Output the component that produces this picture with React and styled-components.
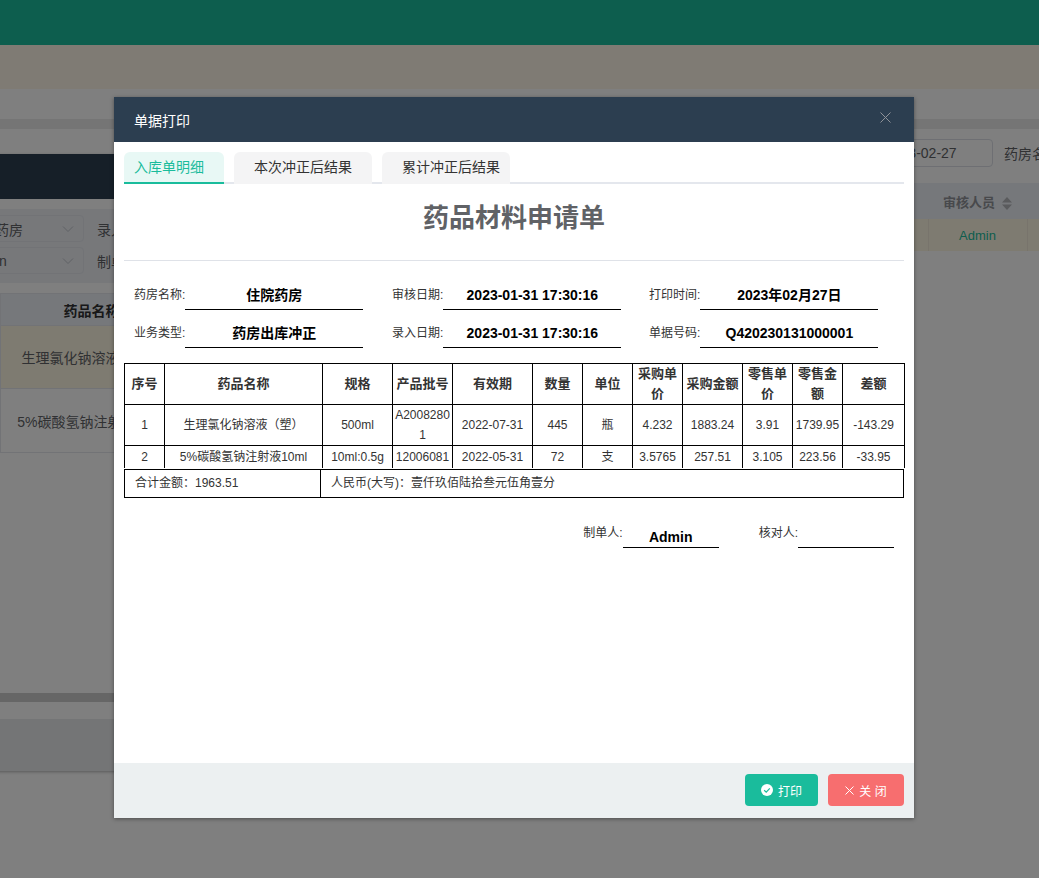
import React from "react";
import styled, { createGlobalStyle } from "styled-components";

const Global = createGlobalStyle`
  html, body { margin: 0; padding: 0; height: 100%; overflow: hidden; background: #fff; }
  body { font-family: "Liberation Sans", "Noto Sans CJK SC", sans-serif; font-size: 14px; color: #333; }
  * { box-sizing: border-box; }
`;

const Page = styled.div`
  position: relative; width: 1039px; height: 878px; overflow: hidden; background: #fff;
  display: flex; flex-direction: column;
`;
const TopBar = styled.div`height: 45px; background: #1abc9c; flex: none;`;
const Notice = styled.div`height: 44px; background: #fff7e9; flex: none;`;
const TabStrip = styled.div`height: 30px; background: #fff; flex: none;`;
const Gutter = styled.div`height: 10px; background: #eaeaea; flex: none;`;

const Toolbar = styled.div`
  display: flex; align-items: center; gap: 11px; padding: 10px 0 0 860px; flex: none; white-space: nowrap;
`;
const DateInput = styled.div`
  flex: none; width: 133px; height: 28px; padding-left: 24px; line-height: 26px;
  border: 1px solid #dcdfe6; border-radius: 4px; color: #606266;
`;
const ToolLabel = styled.span`color: #606266;`;

const ListTable = styled.table`
  margin-top: 16px; width: 1127px; table-layout: fixed; border-collapse: collapse; flex: none;
`;
const ListHead = styled.th`
  height: 36px; padding: 0; background: #ecf0f6; font-size: 13px; font-weight: bold; color: #909399; text-align: center;
  svg { margin-left: 7px; vertical-align: -3px; }
`;
const ListCell = styled.td`
  height: 32px; padding: 0; background: #fdf6e3; font-size: 13px; text-align: center; color: #1abc9c;
  border-right: 1px solid #f0e9d8;
`;

const BackDialog = styled.div`
  position: absolute; left: -54px; top: 154px; width: 900px; height: 617px;
  background: #fff; display: flex; flex-direction: column;
  box-shadow: 0 1px 3px rgba(0,0,0,.3);
`;
const BackHead = styled.div`height: 45px; flex: none; background: #2c3e50;`;
const FilterBlock = styled.div`
  margin-top: 10px; height: 74px; flex: none; padding: 6px 10px 0; background: #eef0f4;
  display: flex; flex-direction: column; gap: 5px;
`;
const FilterRow = styled.div`display: flex; align-items: center; gap: 13px;`;
const FakeSelect = styled.div`
  width: 128px; height: 27px; padding: 0 10px; border: 1px solid #e4e7ed; border-radius: 4px; flex: none;
  display: flex; align-items: center; justify-content: space-between; color: #606266; font-size: 14px;
  svg { margin-right: -1px; }
`;
const FilterLabel = styled.span`color: #606266; font-size: 14px;`;
const BackTable = styled.table`
  margin: 10px 0 0 54px; width: 836px; table-layout: fixed; border-collapse: collapse; flex: none;
`;
const BackHeadCell = styled.th`
  height: 32px; padding: 0; background: #ecf0f6; border: 1px solid #e4e7ed; font-size: 14px; color: #303133;
`;
const BackCell = styled.td`
  height: ${p => p.$h}px; padding: 0; background: ${p => p.$warn ? "#fdf6e3" : "#fff"};
  border: 1px solid #e4e7ed; text-align: center; color: #606266; font-size: 14px;
`;
const Spacer = styled.div`flex: 1;`;
const ScrollTrack = styled.div`height: 9px; flex: none; background: #cdcdcd; margin-bottom: 17px;`;
const BackFoot = styled.div`height: 52px; flex: none; background: #e8eaec;`;

const Mask = styled.div`position: absolute; inset: 0; background: rgba(0,0,0,.5);`;

const Modal = styled.div`
  position: absolute; left: 114px; top: 97px; width: 800px; height: 721px; background: #fff;
  display: flex; flex-direction: column; box-shadow: 0 1px 4px rgba(0,0,0,.4);
`;
const ModalHead = styled.div`
  height: 45px; flex: none; background: #2c3e50; color: #fff; padding: 0 24px 0 20px;
  display: flex; align-items: center; justify-content: space-between; font-size: 14px;
`;
const CloseX = styled.svg`display: block; margin-top: -4px; margin-right: -1px;`;
const ModalBody = styled.div`flex: 1; padding: 10px 10px 0; overflow: hidden;`;
const Tabs = styled.div`display: flex; gap: 10px; height: 32px; border-bottom: 2px solid #e4e7ed;`;
const Tab = styled.div`
  height: 32px; flex: none; line-height: 31px; font-size: 14px; border-radius: 6px 6px 0 0;
  padding: ${p => p.$pad};
  background: ${p => p.$active ? "#e8f8f5" : "#f4f4f5"};
  color: ${p => p.$active ? "#1abc9c" : "#333"};
  ${p => p.$active ? "border-bottom: 2px solid #1abc9c;" : ""}
`;
const Title = styled.h1`
  margin: 0; height: 77px; line-height: 69px; text-align: center; font-size: 26px; font-weight: bold;
  color: #606266; border-bottom: 1px solid #dfe2e8;
`;
const InfoGrid = styled.div`
  display: grid; grid-template-columns: 258px 257px 1fr; row-gap: 9px; padding: 20px 0 0 10px;
`;
const Field = styled.div`display: flex; align-items: flex-end;`;
const FieldLabel = styled.span`font-size: 12px; line-height: 28px; height: 29px; color: #333; flex: none;`;
const FieldValue = styled.span`
  width: ${p => p.$w}px; height: ${p => p.$h}px; line-height: ${p => p.$h - 1}px; flex: none; text-align: center;
  font-size: 14px; font-weight: bold; color: #000; border-bottom: 1px solid #000;
`;
const Sheet = styled.table`
  margin-top: 15px; width: 780px; table-layout: fixed; border-collapse: collapse;
`;
const SheetHead = styled.th`
  height: 41px; padding: 0; border: 1px solid #000; font-size: 13px; line-height: 20px; font-weight: bold; color: #333;
  word-break: break-all; text-align: center;
`;
const SheetCell = styled.td`
  height: ${p => p.$last ? 22 : 41}px; padding: 0; border: 1px solid #000; ${p => p.$last ? "border-bottom: 0;" : ""}
  font-size: 12px; line-height: 20px; color: #333; word-break: break-all; text-align: center;
`;
const TotalRow = styled.div`
  margin-top: 1px; height: 29px; width: 780px; border: 1px solid #000; display: flex; font-size: 12px; color: #333;
`;
const TotalCell = styled.div`
  width: ${p => p.$w || "auto"}; flex: ${p => p.$w ? "none" : 1}; line-height: 27px; padding-left: 10px;
  ${p => p.$w ? "border-right: 1px solid #000;" : ""}
`;
const SignRow = styled.div`
  display: flex; justify-content: flex-end; gap: 40px; margin-top: 21px; padding-right: 10px;
`;
const ModalFoot = styled.div`
  height: 55px; flex: none; background: #ecf0f1; padding: 11px 10px 0; display: flex; justify-content: flex-end; gap: 10px;
`;
const Btn = styled.button`
  width: ${p => p.$w}px; height: 32px; border: 0; border-radius: 4px; padding: 0; color: #fff; font: inherit; font-size: 12px;
  background: ${p => p.$bg}; display: flex; align-items: center; justify-content: center; gap: 5px;
`;

const Chevron = () => (
  <svg width="12" height="12" viewBox="0 0 12 12" fill="none" stroke="#c0c4cc" strokeWidth="1"><path d="M1 3.5l5 5 5-5" /></svg>
);

const cols = [40, 158, 70, 60, 80, 50, 50, 50, 60, 50, 50, 62];
const heads = ["序号", "药品名称", "规格", "产品批号", "有效期", "数量", "单位", "采购单价", "采购金额", "零售单价", "零售金额", "差额"];
const rows = [
  ["1", "生理氯化钠溶液（塑）", "500ml", "A20082801", "2022-07-31", "445", "瓶", "4.232", "1883.24", "3.91", "1739.95", "-143.29"],
  ["2", "5%碳酸氢钠注射液10ml", "10ml:0.5g", "12006081", "2022-05-31", "72", "支", "3.5765", "257.51", "3.105", "223.56", "-33.95"],
];
const info = [
  ["药房名称:", "住院药房"], ["审核日期:", "2023-01-31 17:30:16"], ["打印时间:", "2023年02月27日"],
  ["业务类型:", "药房出库冲正"], ["录入日期:", "2023-01-31 17:30:16"], ["单据号码:", "Q420230131000001"],
];

export default function App() {
  return (
    <Page>
      <Global />
      <TopBar />
      <Notice />
      <TabStrip />
      <Gutter />
      <Toolbar>
        <DateInput>2023-02-27</DateInput>
        <ToolLabel>药房名称</ToolLabel>
      </Toolbar>
      <ListTable>
        <colgroup><col width="928" /><col width="99" /><col width="100" /></colgroup>
        <thead>
          <tr>
            <ListHead />
            <ListHead>
              审核人员
              <svg width="10" height="13" viewBox="0 0 10 13" fill="#b4b6ba"><path d="M5 0l5 5.5H0zM5 13L0 7.5h10z" /></svg>
            </ListHead>
            <ListHead />
          </tr>
        </thead>
        <tbody>
          <tr><ListCell /><ListCell>Admin</ListCell><ListCell /></tr>
        </tbody>
      </ListTable>

      <BackDialog>
        <BackHead />
        <FilterBlock>
          <FilterRow><FakeSelect>住院药房<Chevron /></FakeSelect><FilterLabel>录入日期</FilterLabel></FilterRow>
          <FilterRow><FakeSelect>Admin<Chevron /></FakeSelect><FilterLabel>制单人</FilterLabel></FilterRow>
        </FilterBlock>
        <BackTable>
          <colgroup><col width="182" /><col width="654" /></colgroup>
          <thead><tr><BackHeadCell>药品名称</BackHeadCell><BackHeadCell /></tr></thead>
          <tbody>
            <tr><BackCell $warn $h={63}>生理氯化钠溶液（塑）</BackCell><BackCell $warn $h={63} /></tr>
            <tr><BackCell $h={64}>5%碳酸氢钠注射液10ml</BackCell><BackCell $h={64} /></tr>
          </tbody>
        </BackTable>
        <Spacer />
        <ScrollTrack />
        <BackFoot />
      </BackDialog>

      <Mask />

      <Modal>
        <ModalHead>
          <span>单据打印</span>
          <CloseX width="11" height="11" viewBox="0 0 11 11" fill="none" stroke="#909399" strokeWidth="1"><path d="M.5.5l10 10M10.5.5l-10 10" /></CloseX>
        </ModalHead>
        <ModalBody>
          <Tabs>
            <Tab $active $pad="0 20px 0 10px">入库单明细</Tab>
            <Tab $pad="0 20px">本次冲正后结果</Tab>
            <Tab $pad="0 10px 0 20px">累计冲正后结果</Tab>
          </Tabs>
          <Title>药品材料申请单</Title>
          <InfoGrid>
            {info.map(([k, v]) => (
              <Field key={k}>
                <FieldLabel>{k}</FieldLabel>
                <FieldValue $w={178} $h={29}>{v}</FieldValue>
              </Field>
            ))}
          </InfoGrid>
          <Sheet>
            <colgroup>{cols.map((w, i) => <col key={i} width={w} />)}</colgroup>
            <thead><tr>{heads.map(h => <SheetHead key={h}>{h}</SheetHead>)}</tr></thead>
            <tbody>
              {rows.map((r, i) => (
                <tr key={i}>{r.map((c, j) => <SheetCell key={j} $last={i === 1}>{c}</SheetCell>)}</tr>
              ))}
            </tbody>
          </Sheet>
          <TotalRow>
            <TotalCell $w="196px">合计金额：1963.51</TotalCell>
            <TotalCell>人民币(大写)：壹仟玖佰陆拾叁元伍角壹分</TotalCell>
          </TotalRow>
          <SignRow>
            <Field><FieldLabel>制单人:</FieldLabel><FieldValue $w={96} $h={21}>Admin</FieldValue></Field>
            <Field><FieldLabel>核对人:</FieldLabel><FieldValue $w={96} $h={21} /></Field>
          </SignRow>
        </ModalBody>
        <ModalFoot>
          <Btn $w={73} $bg="#1abc9c">
            <svg width="12" height="12" viewBox="0 0 12 12"><circle cx="6" cy="6" r="6" fill="#fff" /><path d="M3.2 6.2l2 1.9 3.6-3.8" fill="none" stroke="#1abc9c" strokeWidth="1.2" /></svg>
            打印
          </Btn>
          <Btn $w={76} $bg="#f76e6f">
            <svg width="9" height="9" viewBox="0 0 9 9" fill="none" stroke="#fff" strokeWidth="1"><path d="M.5.5l8 8M8.5.5l-8 8" /></svg>
            关 闭
          </Btn>
        </ModalFoot>
      </Modal>
    </Page>
  );
}
